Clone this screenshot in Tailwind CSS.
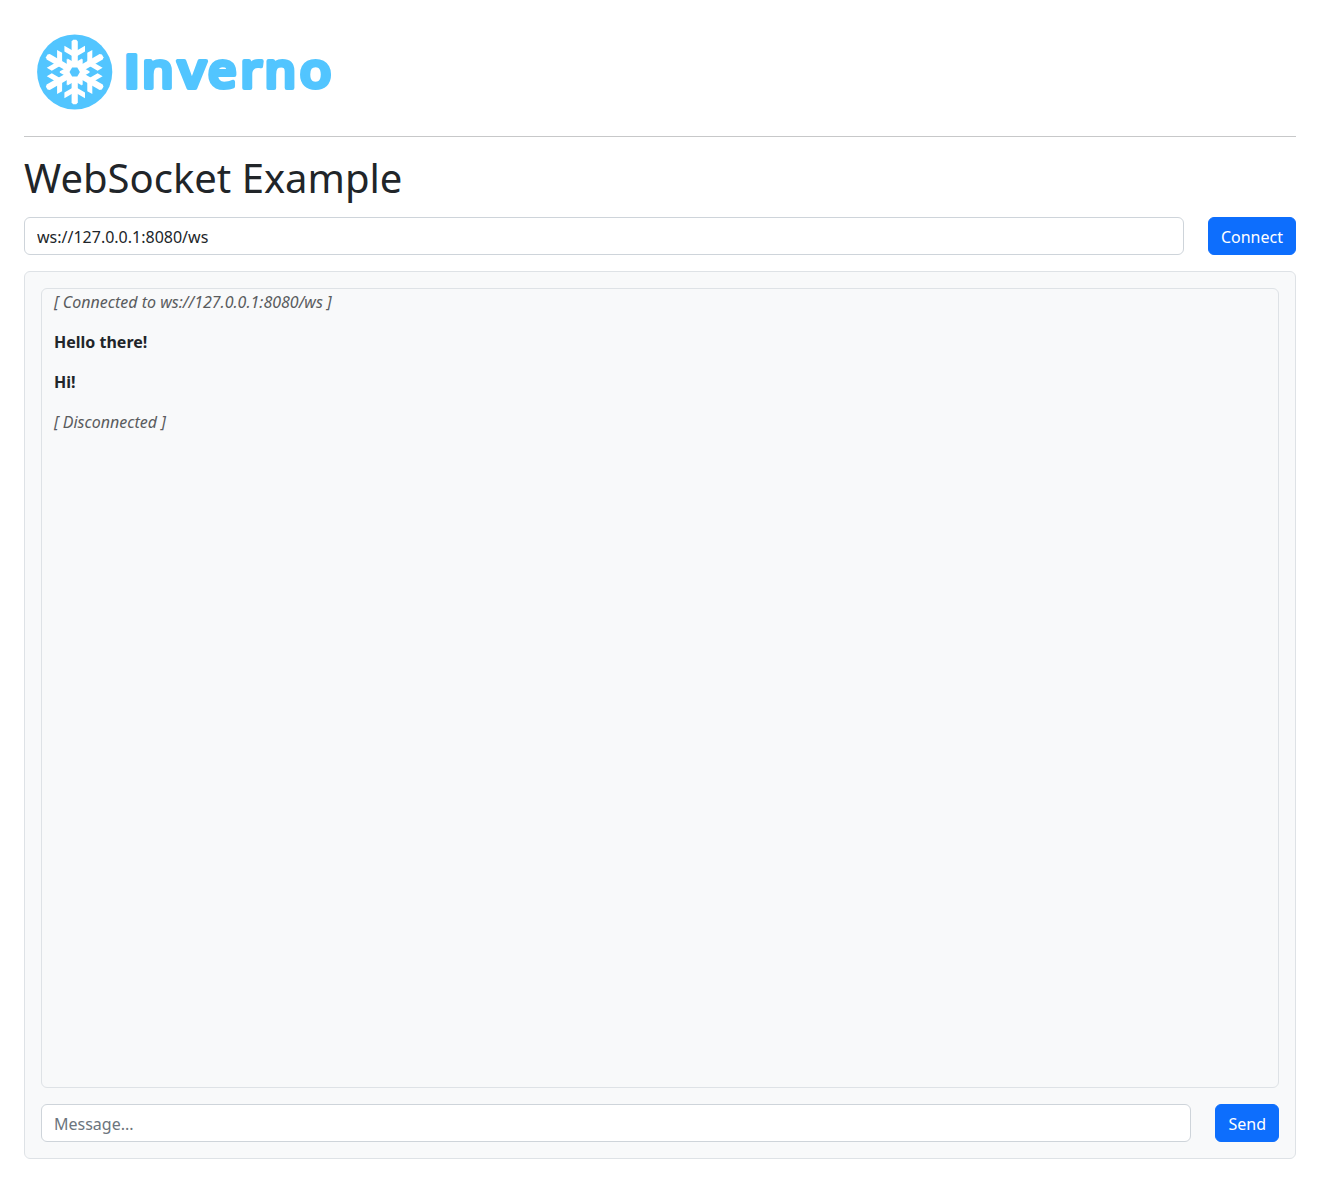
<!DOCTYPE html>
<html lang="en">
<head>
<meta charset="utf-8">
<title>WebSocket Example</title>
<script src="https://cdn.jsdelivr.net/npm/@tailwindcss/browser@4"></script>
</head>
<body class="bg-white font-['Noto_Sans',sans-serif] text-base text-[#212529]">
<main class="p-6">
  <header class="border-b border-[#c7c8c9] pb-6">
    <svg class="block h-[88px] w-[320px]" viewBox="24 24 320 88" role="img" aria-label="Inverno">
      <circle cx="74.7" cy="72" r="37.6" fill="#52c5ff"/>
      <defs>
        <g id="arm">
          <path d="M-3.1 -5V-30.6L-1.6 -32.3H1.6L3.1 -30.6V-5z"/>
          <path d="M0 -14.5L-10.3 -20.5V-26.3L0 -20.3L10.3 -26.3V-20.5z"/>
          <path d="M0 -5L-7.2 -9V-13.4L0 -9.2L7.2 -13.4V-9z"/>
        </g>
      </defs>
      <g transform="translate(74.7 72)" fill="#fff">
        <use href="#arm"/><use href="#arm" transform="rotate(60)"/><use href="#arm" transform="rotate(120)"/>
        <use href="#arm" transform="rotate(180)"/><use href="#arm" transform="rotate(240)"/><use href="#arm" transform="rotate(300)"/>
        <path d="M-10 0L-5 -8.66H5L10 0L5 8.66H-5z"/>
        <path fill="#52c5ff" d="M-5.2 0L-2.6 -4.5H2.6L5.2 0L2.6 4.5H-2.6z"/>
      </g>
      <g class="font-['Noto_Sans',sans-serif] font-medium" fill="#52c5ff" stroke="#52c5ff" stroke-width="4.2" stroke-linejoin="round">
        <text class="font-['Liberation_Sans',sans-serif] font-bold" font-size="47.5" y="88.2" x="124.9">I</text>
        <g font-size="49">
          <text transform="translate(142 88.4) scale(1.03 1)">n</text>
          <text transform="translate(178 88.4) scale(1.08 1)">v</text>
          <text transform="translate(207.8 88.4) scale(1.03 1)">e</text>
          <text transform="translate(240.2 88.4) scale(1.06 1)">r</text>
          <text transform="translate(264.4 88.4) scale(1.03 1)">n</text>
          <text transform="translate(299.4 88.4) scale(1.07 1)">o</text>
        </g>
      </g>
    </svg>
  </header>
  <h1 class="mt-[17px] text-[40px] leading-[48px] font-normal">WebSocket Example</h1>
  <form class="mt-[15px] flex gap-6">
    <input class="h-[38px] min-w-0 flex-1 rounded-md border border-[#ced4da] bg-white px-3 pt-0.5" value="ws://127.0.0.1:8080/ws" aria-label="Server URL">
    <button type="button" class="h-[38px] rounded-md border border-[#0d6efd] bg-[#0d6efd] px-3 pt-0.5 text-white">Connect</button>
  </form>
  <section class="mt-4 rounded-md border border-[#dee2e6] bg-[#f8f9fa] p-4">
    <div class="flex h-[800px] flex-col gap-4 rounded-md border border-[#dee2e6] px-3 pt-px">
      <p class="text-[#5a5c5e] italic">[ Connected to ws://127.0.0.1:8080/ws ]</p>
      <p class="font-bold">Hello there!</p>
      <p class="font-bold">Hi!</p>
      <p class="text-[#5a5c5e] italic">[ Disconnected ]</p>
    </div>
    <form class="mt-4 flex gap-6">
      <input class="h-[38px] min-w-0 flex-1 rounded-md border border-[#ced4da] bg-white px-3 pt-0.5 placeholder:text-[#6c757d]" placeholder="Message..." aria-label="Message">
      <button type="button" class="h-[38px] rounded-md border border-[#0d6efd] bg-[#0d6efd] px-3 pt-0.5 text-white">Send</button>
    </form>
  </section>
</main>
</body>
</html>
